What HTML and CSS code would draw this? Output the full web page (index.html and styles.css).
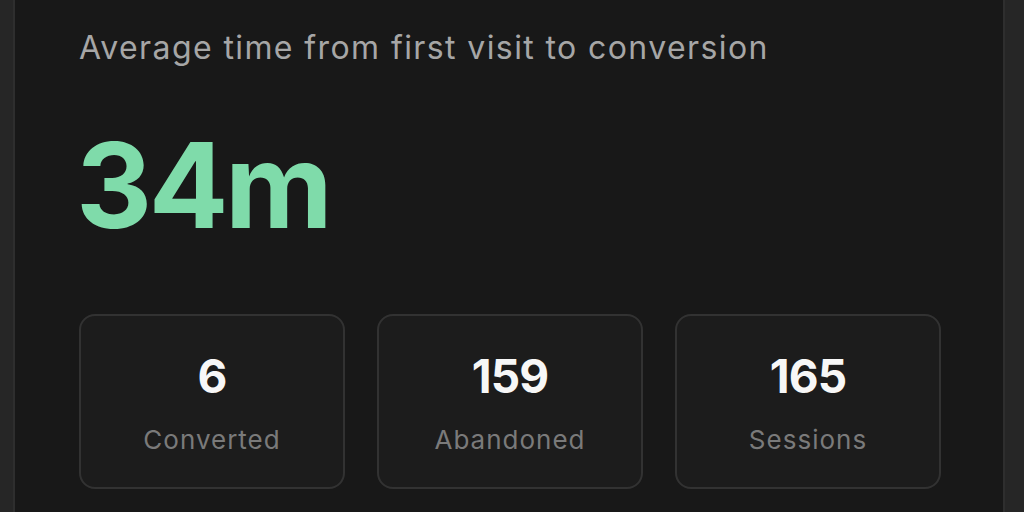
FILE: index.html
```html
<!DOCTYPE html>
<html lang="en">
<head>
<meta charset="utf-8">
<title>Time to conversion</title>
<link rel="stylesheet" href="styles.css">
</head>
<body>
  <section class="card">
    <h2 class="card-title">Average time from first visit to conversion</h2>
    <div class="big-value">34m</div>
    <div class="stats">
      <div class="stat">
        <div class="stat-value">6</div>
        <div class="stat-label">Converted</div>
      </div>
      <div class="stat">
        <div class="stat-value">159</div>
        <div class="stat-label">Abandoned</div>
      </div>
      <div class="stat">
        <div class="stat-value">165</div>
        <div class="stat-label">Sessions</div>
      </div>
    </div>
  </section>
</body>
</html>
```

FILE: styles.css
```css
html, body {
  margin: 0;
  padding: 0;
}
body {
  background: #262626;
  font-family: Inter, "Liberation Sans", sans-serif;
  height: 512px;
  overflow: hidden;
}
.card {
  margin: 0 19px 0 13px;
  background: #181818;
  border: 2px solid #2e2e2e;
  border-top: none;
  padding: 30px 62px 40px 64px;
  min-height: 520px;
  box-sizing: border-box;
}
.card-title {
  margin: 0;
  font-size: 32px;
  line-height: 36px;
  font-weight: 400;
  color: #a6a6a6;
  letter-spacing: 1.4px;
}
.big-value {
  margin: 60px 0 0 -3px;
  font-size: 118px;
  line-height: 118px;
  font-weight: 700;
  color: #7fdbaa;
  letter-spacing: -0.03em;
}
.stats {
  margin-top: 70px;
  display: grid;
  grid-template-columns: repeat(3, 266px);
  gap: 32px;
}
.stat {
  height: 175px;
  box-sizing: border-box;
  background: #1c1c1c;
  border: 2px solid #323232;
  border-radius: 16px;
  padding-top: 33px;
  text-align: center;
}
.stat-value {
  font-size: 46px;
  line-height: 54px;
  font-weight: 700;
  color: #f7f7f7;
  letter-spacing: -0.02em;
}
.stat-label {
  margin-top: 22px;
  font-size: 26px;
  line-height: 30px;
  color: #7a7a7a;
  letter-spacing: 1px;
}
```
